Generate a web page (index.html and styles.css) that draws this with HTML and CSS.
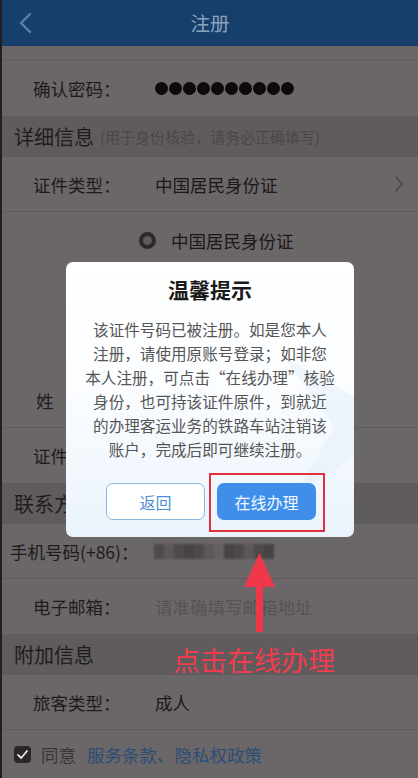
FILE: index.html
```html
<!DOCTYPE html>
<html lang="zh-CN">
<head>
<meta charset="utf-8">
<title>注册</title>
<link rel="stylesheet" href="styles.css">
</head>
<body>
<div class="screen">
  <header class="nav">
    <span class="nav-back">
      <svg width="14" height="22" viewBox="0 0 14 22"><polyline points="12,2 3,11 12,20" fill="none" stroke="#5f80a8" stroke-width="2.4" stroke-linecap="round" stroke-linejoin="round"/></svg>
    </span>
    <h1 class="nav-title">注册</h1>
    <span class="nav-side"></span>
  </header>

  <div class="stub"></div>

  <div class="row">
    <span class="label">确认密码：</span>
    <span class="dots"><i></i><i></i><i></i><i></i><i></i><i></i><i></i><i></i><i></i><i></i></span>
  </div>

  <div class="section">详细信息<span class="hint">(用于身份核验，请务必正确填写)</span></div>

  <div class="row row-line">
    <span class="label">证件类型：</span>
    <span class="value">中国居民身份证</span>
    <svg class="chev" width="10" height="18" viewBox="0 0 10 18"><polyline points="2,2 8,9 2,16" fill="none" stroke="#4a4648" stroke-width="1.6" stroke-linecap="round" stroke-linejoin="round"/></svg>
  </div>

  <div class="radios">
    <div class="radio-item"><span class="radio"></span><span class="value">中国居民身份证</span></div>
  </div>

  <div class="row row-line row-name"><span class="label">姓</span></div>
  <div class="row"><span class="label">证件号码：</span></div>

  <div class="section">联系方式</div>

  <div class="row row-line row-phone">
    <span class="label">手机号码(+86)：</span>
    <span class="blur"><i class="b1"></i><i class="b2"></i><i class="b1"></i><i class="b3"></i><i class="b1"></i><i class="b2"></i><i class="b4"></i><i class="b3"></i><i class="b1"></i><i class="b2"></i><i class="b1"></i><i class="b3"></i></span>
  </div>

  <div class="row">
    <span class="label">电子邮箱：</span>
    <span class="placeholder">请准确填写邮箱地址</span>
  </div>

  <div class="section">附加信息</div>

  <div class="row row-line">
    <span class="label">旅客类型：</span>
    <span class="value">成人</span>
  </div>

  <div class="agree">
    <svg class="check" width="17" height="17" viewBox="0 0 17 17"><rect x="0" y="0" width="17" height="17" rx="4" fill="#2b2729"/><polyline points="4,8.8 7.2,12 13,5" fill="none" stroke="#e8e6e7" stroke-width="1.8" stroke-linecap="round" stroke-linejoin="round"/></svg>
    <span class="agree-text">同意</span>
    <span class="link">服务条款、隐私权政策</span>
  </div>

  <div class="dialog">
    <svg class="dialog-deco" width="80" height="140" viewBox="0 0 80 140"><path d="M10 0 L80 40 L80 100 L20 140 L60 70 Z" fill="#e4eef9" opacity="0.55"/></svg>
    <h2 class="dialog-title">温馨提示</h2>
    <p class="dialog-text">该证件号码已被注册。如是您本人<br>注册，请使用原账号登录；如非您<br>本人注册，可点击“在线办理”核验<br>身份，也可持该证件原件，到就近<br>的办理客运业务的铁路车站注销该<br>账户，完成后即可继续注册。</p>
    <div class="dialog-actions">
      <button class="btn btn-ghost">返回</button>
      <button class="btn btn-primary">在线办理</button>
    </div>
    <span class="mark-box"></span>
  </div>

  <svg class="arrow" width="40" height="86" viewBox="0 0 40 86"><polygon points="19.5,3 4,37 35,37" fill="#f0364a"/><rect x="16" y="34" width="7" height="48" fill="#f0364a"/></svg>
  <div class="tip-text">点击在线办理</div>
</div>
</body>
</html>
```

FILE: styles.css
```css
* { box-sizing: border-box; }

html, body {
  margin: 0;
  padding: 0;
}

body {
  font-family: "Noto Sans CJK SC", "Noto Sans", sans-serif;
  background: #6b6668;
}

.screen {
  position: relative;
  width: 418px;
  height: 778px;
  overflow: hidden;
  background: #6b6668;
  border-left: 2px solid #231f21;
  color: #1e1b1d;
}

.nav {
  display: flex;
  align-items: center;
  height: 46px;
  background: #163f6c;
}

.nav-back {
  width: 60px;
  padding-left: 16px;
  display: flex;
  align-items: center;
}

.nav-title {
  flex: 1;
  margin: 0;
  text-align: center;
  font-size: 19.5px;
  font-weight: normal;
  color: #8ba2be;
  line-height: 46px;
}

.nav-side { width: 60px; }

.stub {
  height: 15px;
  border-bottom: 1px solid #615c5e;
}

.row {
  display: flex;
  align-items: center;
  height: 55px;
  padding-left: 31px;
  font-size: 17.5px;
}

.row-line { border-bottom: 1px solid #5f5a5c; }

.label {
  width: 122px;
  flex-shrink: 0;
  white-space: nowrap;
}

.row-name { padding-left: 34px; }
.row-name .label { width: auto; }

.value { color: #1b181a; }

.dots {
  display: flex;
  gap: 1px;
}

.dots i {
  width: 13px;
  height: 13px;
  border-radius: 50%;
  background: #0c0a0b;
}

.chev {
  margin-left: auto;
  margin-right: 14px;
}

.section {
  display: flex;
  align-items: center;
  height: 41px;
  padding-left: 12px;
  background: #605b5d;
  font-size: 20px;
  color: #1f1c1e;
  white-space: nowrap;
}

.hint {
  font-size: 15px;
  color: #4b4749;
  margin-left: 6px;
}

.radios {
  height: 161px;
}

.radio-item {
  display: flex;
  align-items: center;
  height: 56px;
  padding-left: 137px;
  font-size: 17.5px;
}

.radio {
  width: 17px;
  height: 17px;
  border-radius: 50%;
  border: 4.5px solid #2d292b;
  background: #5f5a5c;
  margin-right: 15px;
}

.row-phone { padding-left: 8px; }
.row-phone .label { width: 144px; }

.blur {
  display: flex;
  height: 15px;
  width: 120px;
  filter: blur(1.3px);
}

.blur i { flex: 1; }
.blur .b1 { background: #4e4a4c; }
.blur .b2 { background: #5c5759; }
.blur .b3 { background: #474345; }
.blur .b4 { background: #656062; }

.placeholder { color: #575355; }

.agree {
  display: flex;
  align-items: center;
  height: 48px;
  padding-left: 12px;
  font-size: 17.5px;
}

.check { margin-right: 10px; }

.agree-text {
  color: #3a3638;
  margin-right: 11px;
}

.link { color: #2c4e76; }

.dialog {
  position: absolute;
  left: 64px;
  top: 262px;
  width: 288px;
  height: 275px;
  border-radius: 7px;
  background: linear-gradient(to bottom, #ffffff 0%, #fbfdff 45%, #eaf3fc 100%);
  padding-top: 12px;
  text-align: center;
}

.dialog-deco {
  position: absolute;
  right: 0;
  top: 95px;
}

.dialog-title {
  position: relative;
  margin: 0;
  font-size: 21px;
  line-height: 30px;
  font-weight: bold;
  color: #1a1a1a;
}

.dialog-text {
  position: relative;
  margin: 13px 0 0;
  font-size: 15.6px;
  line-height: 24px;
  color: #555555;
  white-space: nowrap;
}

.dialog-actions {
  position: relative;
  display: flex;
  justify-content: center;
  gap: 12px;
  margin-top: 22px;
  padding-left: 2px;
}

.btn {
  width: 99px;
  height: 37px;
  border-radius: 7px;
  font-family: inherit;
  font-size: 16px;
  padding: 0;
}

.btn-ghost {
  background: #ffffff;
  border: 1.5px solid #8db7df;
  color: #4b8fd8;
}

.btn-primary {
  background: #3f8fea;
  border: none;
  color: #f2f7ff;
}

.mark-box {
  position: absolute;
  left: 143px;
  top: 211px;
  width: 116px;
  height: 59px;
  border: 2px solid #e3303f;
}

.arrow {
  position: absolute;
  left: 238px;
  top: 550px;
}

.tip-text {
  position: absolute;
  left: 171px;
  top: 642px;
  font-size: 27px;
  line-height: 36px;
  color: #f23c50;
  white-space: nowrap;
}
```
